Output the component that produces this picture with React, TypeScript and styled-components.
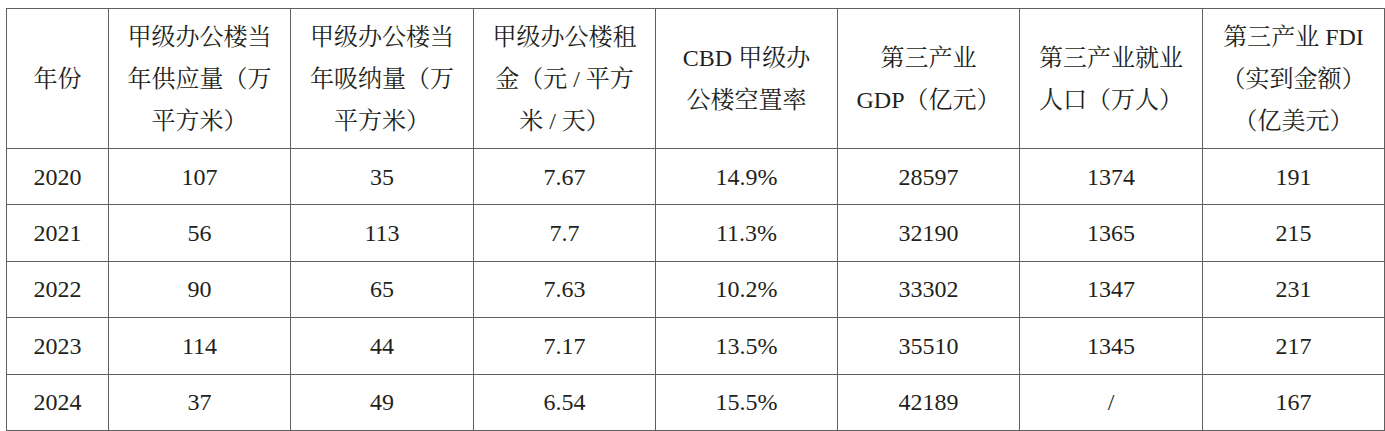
import styled, { createGlobalStyle } from "styled-components";

const GlobalStyle = createGlobalStyle`
  html, body {
    margin: 0;
    padding: 0;
    background: #ffffff;
  }
`;

const Page = styled.div`
  padding: 8px 2px 0 6px;
  font-family: "Liberation Serif", "Noto Serif CJK SC", "Noto Sans CJK SC", serif;
  color: #231f20;
`;

const Table = styled.table`
  width: 1378px;
  border-collapse: collapse;
  table-layout: fixed;
  font-size: 24px;
`;

const HeadCell = styled.th`
  height: 139px;
  padding: 0;
  border: 1px solid #5f5f5f;
  font-weight: normal;
  line-height: 42px;
  text-align: center;
  vertical-align: middle;
`;

const Row = styled.tr`
  height: 56.4px;
`;

const Cell = styled.td`
  padding: 0;
  border: 1px solid #5f5f5f;
  text-align: center;
  vertical-align: middle;
  line-height: 28px;
`;

const columns: { width: number; lines: string[] }[] = [
  { width: 102, lines: ["年份"] },
  { width: 182, lines: ["甲级办公楼当", "年供应量（万", "平方米）"] },
  { width: 183, lines: ["甲级办公楼当", "年吸纳量（万", "平方米）"] },
  { width: 182, lines: ["甲级办公楼租", "金（元 / 平方", "米 / 天）"] },
  { width: 182, lines: ["CBD 甲级办", "公楼空置率"] },
  { width: 182, lines: ["第三产业", "GDP（亿元）"] },
  { width: 183, lines: ["第三产业就业", "人口（万人）"] },
  { width: 182, lines: ["第三产业 FDI", "（实到金额）", "（亿美元）"] },
];

const rows: string[][] = [
  ["2020", "107", "35", "7.67", "14.9%", "28597", "1374", "191"],
  ["2021", "56", "113", "7.7", "11.3%", "32190", "1365", "215"],
  ["2022", "90", "65", "7.63", "10.2%", "33302", "1347", "231"],
  ["2023", "114", "44", "7.17", "13.5%", "35510", "1345", "217"],
  ["2024", "37", "49", "6.54", "15.5%", "42189", "/", "167"],
];

const App = () => {
  return (
    <>
      <GlobalStyle />
      <Page>
        <Table>
          <colgroup>
            {columns.map((col, i) => (
              <col key={i} style={{ width: col.width }} />
            ))}
          </colgroup>
          <thead>
            <tr>
              {columns.map((col, i) => (
                <HeadCell key={i}>
                  {col.lines.map((line, j) => (
                    <div key={j}>{line}</div>
                  ))}
                </HeadCell>
              ))}
            </tr>
          </thead>
          <tbody>
            {rows.map((row, i) => (
              <Row key={i}>
                {row.map((value, j) => (
                  <Cell key={j}>{value}</Cell>
                ))}
              </Row>
            ))}
          </tbody>
        </Table>
      </Page>
    </>
  );
};

export default App;
